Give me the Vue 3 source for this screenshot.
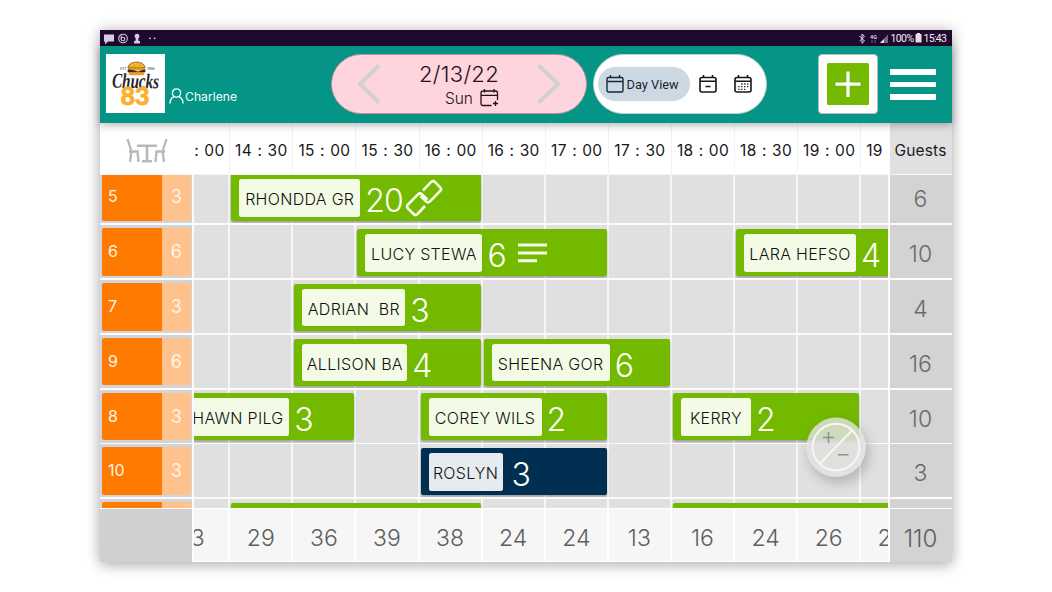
<script setup>
// Columnas de media hora
const columnas = [
  { hora: '14 : 00', total: '3' },
  { hora: '14 : 30', total: '29' },
  { hora: '15 : 00', total: '36' },
  { hora: '15 : 30', total: '39' },
  { hora: '16 : 00', total: '38' },
  { hora: '16 : 30', total: '24' },
  { hora: '17 : 00', total: '24' },
  { hora: '17 : 30', total: '13' },
  { hora: '18 : 00', total: '16' },
  { hora: '18 : 30', total: '24' },
  { hora: '19 : 00', total: '26' },
  { hora: '19 : 30', total: '24' }
]

// inicio = columna, duracion = medias horas, ancho = ancho de la etiqueta
const mesas = [
  { mesa: '5', plazas: 3, guests: 6, reservas: [
    { nombre: 'RHONDDA GR', personas: 20, inicio: 2, duracion: 4, ancho: 121, icono: 'link' }
  ] },
  { mesa: '6', plazas: 6, guests: 10, reservas: [
    { nombre: 'LUCY STEWA', personas: 6, inicio: 4, duracion: 4, ancho: 117, icono: 'nota' },
    { nombre: 'LARA HEFSO', personas: 4, inicio: 10, duracion: 3, ancho: 112 }
  ] },
  { mesa: '7', plazas: 3, guests: 4, reservas: [
    { nombre: 'ADRIAN\u00a0 BR', personas: 3, inicio: 3, duracion: 3, ancho: 103 }
  ] },
  { mesa: '9', plazas: 6, guests: 16, reservas: [
    { nombre: 'ALLISON BA', personas: 4, inicio: 3, duracion: 3, ancho: 105 },
    { nombre: 'SHEENA GOR', personas: 6, inicio: 6, duracion: 3, ancho: 118 }
  ] },
  { mesa: '8', plazas: 3, guests: 10, reservas: [
    { nombre: 'SHAWN PILG', personas: 3, inicio: 1, duracion: 3, ancho: 113 },
    { nombre: 'COREY WILS', personas: 2, inicio: 5, duracion: 3, ancho: 113 },
    { nombre: 'KERRY', personas: 2, inicio: 9, duracion: 3, ancho: 70 }
  ] },
  { mesa: '10', plazas: 3, guests: 3, reservas: [
    { nombre: 'ROSLYN', personas: 3, inicio: 5, duracion: 3, ancho: 74, sentado: true }
  ] },
  { mesa: '', plazas: '', guests: '', reservas: [
    { nombre: '', personas: '', inicio: 2, duracion: 4, ancho: 0 },
    { nombre: '', personas: '', inicio: 9, duracion: 4, ancho: 0 }
  ] }
]
</script>

<template>
  <div class="pagina">
    <div class="tablet">
      <div class="estado">
        <div class="estado-izq">
          <svg width="62" height="15" viewBox="0 0 62 15">
            <path d="M4 3.5h10v7H8l-3 3v-3H4z" fill="#d8cde0" />
            <circle cx="23" cy="7.5" r="4.3" fill="none" stroke="#d8cde0" stroke-width="1.1" />
            <circle cx="23" cy="8" r="1.8" fill="none" stroke="#d8cde0" stroke-width="1.1" />
            <path d="M21.2 4.5v4" stroke="#d8cde0" />
            <circle cx="37" cy="5.2" r="2.4" fill="#d8cde0" />
            <path d="M36 6h2l.6 4H40v2.5h-6V10h1.4z" fill="#d8cde0" />
            <circle cx="50" cy="7.3" r=".9" fill="#d8cde0" />
            <circle cx="54.6" cy="7.3" r=".9" fill="#d8cde0" />
          </svg>
        </div>
        <div class="estado-der">
          <svg width="33" height="15" viewBox="0 0 33 15">
            <path d="M1.500 5l5 5-2.500 2.300V3l2.500 2.200-5 5" fill="none" stroke="#e6dfea" />
            <text x="12" y="7.500" font-size="5.500" fill="#d8cde0" font-weight="700">4G</text>
            <path d="M14 9v3M17 12V9" stroke="#8c7d98" stroke-width=".8" />
            <path d="M30 3.500V12h-8z" fill="#76677f" />
            <path d="M26 8v4h-4z" fill="#e6dfea" />
          </svg>
          <span class="bateria-texto">100%</span>
          <svg width="7" height="10" viewBox="0 0 7 10"><path d="M2 0h3v1h1.500v8.500h-6V1H2z" fill="#e6dfea" /></svg>
          <span class="reloj">15:43</span>
        </div>
      </div>

      <header class="cabecera">
        <div class="logo">
          <svg width="59" height="59" viewBox="0 0 59 59">
            <path d="M22 14c0-8 17-8 17 0z" fill="#f5ac25" stroke="#5a3410" stroke-width=".6" />
            <path d="M26 10.500h.8M29 9.300h.8M32.500 10h.8M30.500 12h.8M35 11.800h.8" stroke="#fff2bd" stroke-width=".8" />
            <path d="M21.500 14.200h18l-1 1.300h-16z" fill="#7eaa2c" />
            <rect x="21.500" y="15.300" width="18" height="3.200" rx="1.400" fill="#5b1d10" />
            <path d="M22 15.200h17l-4 1.300-3 1.200-4-1.400z" fill="#ffc52e" />
            <path d="M22.300 18.700h16.500q-.3 2.600-2 2.600H24.200q-1.600 0-1.900-2.600z" fill="#efa021" />
            <text x="14" y="16" font-size="3.400" fill="#444">EST</text>
            <text x="41" y="16" font-size="3.400" fill="#444">1996</text>
            <text class="chucks" x="29.500" y="34" text-anchor="middle" textLength="47" lengthAdjust="spacingAndGlyphs" transform="rotate(1 29.500 30)">Chucks</text>
            <text class="ochenta" x="29" y="51" text-anchor="middle" textLength="29" lengthAdjust="spacingAndGlyphs">83</text>
          </svg>
        </div>
        <div class="usuario">
          <svg width="15" height="16" viewBox="0 0 15 16" fill="none" stroke="#fff" stroke-width="1.400">
            <circle cx="7.500" cy="5" r="4.100" />
            <path d="M1 15.500C1 11 3.500 9.200 5.300 8.600M14 15.500c0-4.500-2.500-6.300-4.300-6.900" />
          </svg>
          <span>Charlene</span>
        </div>

        <div class="fecha">
          <svg width="24" height="40" viewBox="0 0 24 40" class="flecha"><path d="M22 1.500L3 20l19 18.500" /></svg>
          <div class="fecha-texto">
            <div class="dia">2/13/22</div>
            <div class="semana">
              <span>Sun</span>
              <svg width="19" height="18" viewBox="0 0 19 18" fill="none" stroke="#241014" stroke-width="1.300">
                <path d="M11.500 16.500H3q-2 0-2-2V4q0-2 2-2h12.500q2 0 2 2v7M1 6.300h16.500M4.500 0v3.500M14 0v3.500M15.500 12v5M13 14.500h5" />
              </svg>
            </div>
          </div>
          <svg width="24" height="40" viewBox="0 0 24 40" class="flecha"><path d="M2 1.500L21 20 2 38.500" /></svg>
        </div>

        <div class="vistas">
          <div class="vista-activa">
            <svg width="18" height="18" viewBox="0 0 18 18" fill="none" stroke="#14283a" stroke-width="1.400">
              <rect x="1" y="2.500" width="16" height="14.500" rx="1.500" /><path d="M1 6.500h16M4.500 0v3M13.500 0v3" />
            </svg>
            <span>Day View</span>
          </div>
          <svg class="vista-icono" width="18" height="18" viewBox="0 0 18 18" fill="none" stroke="#16161c" stroke-width="1.600">
            <rect x="1" y="2.500" width="16" height="14.500" rx="2" /><path d="M1 6.300h16M4.500 0v3M13.500 0v3M6.500 11.500h5" />
          </svg>
          <svg class="vista-icono" width="18" height="18" viewBox="0 0 18 18" fill="none" stroke="#16161c" stroke-width="1.600">
            <rect x="1" y="2.500" width="16" height="14.500" rx="2" /><path d="M1 6.300h16M4.500 0v3M13.500 0v3" />
            <path d="M7.300 9h7M4.300 11.700h10M4.300 14.300h7" stroke-width="1.300" stroke-dasharray="1.300 1.600" />
          </svg>
        </div>

        <button class="nuevo" type="button">
          <svg width="42" height="42" viewBox="0 0 42 42">
            <rect width="42" height="42" rx="1.500" fill="#72b900" />
            <path d="M21 8.500v25.500M8.500 21.200h25" stroke="#fff" stroke-width="3.200" />
          </svg>
        </button>
        <div class="menu"><i></i><i></i><i></i></div>
      </header>

      <div class="horas">
        <div class="horas-mesa">
          <svg width="42" height="25" viewBox="0 0 42 25" fill="none" stroke="#b9b9b9" stroke-width="2.300">
            <path d="M1.500 1l4 12.500M3 13.500h8.500l1 10.500M5.500 13l-1.500 11M40.500 1l-4 12.500M39 13.500h-8.500L29.500 24M36.500 13l1.500 11" />
            <path d="M11 7.700h20M21 7.700v15M16 23.300h10" stroke-width="2.600" />
          </svg>
        </div>
        <div class="ventana">
          <div class="linea">
            <div v-for="c in columnas" :key="c.hora" class="hora">{{ c.hora }}</div>
          </div>
        </div>
        <div class="horas-guests">Guests</div>
      </div>

      <div class="cuerpo">
        <div class="filas">
          <div v-for="(m, i) in mesas" :key="i" class="fila">
            <div class="mesa">
              <div class="mesa-numero">{{ m.mesa }}</div>
              <div class="mesa-plazas">{{ m.plazas }}</div>
            </div>
            <div class="ventana">
              <div class="linea">
                <div v-for="(c, n) in columnas" :key="n" class="celda" :style="{ gridColumn: n + 1 }"></div>
                <div
                  v-for="r in m.reservas"
                  :key="r.inicio"
                  class="reserva"
                  :class="{ sentado: r.sentado }"
                  :style="{ gridColumn: r.inicio + ' / span ' + r.duracion }"
                >
                  <template v-if="r.nombre">
                    <div class="nombre" :style="{ width: r.ancho + 'px' }">{{ r.nombre }}</div>
                    <div class="personas">{{ r.personas }}</div>
                    <svg v-if="r.icono === 'link'" class="icono-link" width="38" height="38" viewBox="0 0 38 38" fill="none" stroke="#f6ffe9" stroke-width="2.600" stroke-linejoin="round">
                      <path d="M18 11.500L26 3.200q2-2 4 0l5 5q2 2 0 4L25 22.300q-2 2-4 0L15.500 17" />
                      <path d="M20 27l-7.500 8q-2 2-4 0L3 29.500q-2-2 0-4L13 15.400q2-2 4 0l5.500 5.300" />
                    </svg>
                    <svg v-if="r.icono === 'nota'" class="icono-nota" width="29" height="20" viewBox="0 0 29 20" stroke="#f6ffe9" stroke-width="3">
                      <path d="M0 2h29M0 10h29M0 17.700h19" />
                    </svg>
                  </template>
                </div>
              </div>
            </div>
            <div class="guests">{{ m.guests }}</div>
          </div>
        </div>
      </div>

      <div class="totales">
        <div class="totales-mesa"></div>
        <div class="ventana">
          <div class="linea">
            <div v-for="(c, n) in columnas" :key="n" class="total">{{ c.total }}</div>
          </div>
        </div>
        <div class="total-general">110</div>
      </div>

      <div class="zoom">
        <svg width="60" height="60" viewBox="0 0 60 60" fill="none">
          <circle cx="30" cy="30" r="29.500" fill="#e2e2e2" fill-opacity=".82" />
          <circle cx="30" cy="30" r="23.300" stroke="#f7f7f2" stroke-width="2" fill="#d8dbd2" fill-opacity=".3" />
          <path d="M14 46.500L46 13.500" stroke="#f7f7f2" stroke-width="2" />
          <path d="M17 20.500h11M22.500 15v11M32 37.700h10.500" stroke="#8b918b" stroke-width="1.500" />
        </svg>
      </div>
    </div>
  </div>
</template>

<style>
body {
  margin: 0;
  background: #fff;
}
</style>

<style scoped>
.pagina {
  box-sizing: border-box;
  width: 1052px;
  height: 592px;
  padding: 30px 0 0 100px;
  overflow: hidden;
  font-family: Inter, "Liberation Sans", sans-serif;
}

.tablet {
  position: relative;
  display: flex;
  flex-direction: column;
  width: 851.5px;
  height: 532px;
  background: #fff;
  box-shadow: 0 0 14px rgba(0, 0, 0, 0.24), 0 5px 12px rgba(0, 0, 0, 0.14);
}

.estado {
  flex: none;
  display: flex;
  justify-content: space-between;
  height: 15.5px;
  background: #20082e;
}

.estado-der {
  display: flex;
  align-items: center;
  padding: 1px 6px 0 0;
  font-family: Roboto, sans-serif;
  font-size: 10.5px;
  color: #f4eff7;
}

.bateria-texto {
  width: 22px;
  margin-right: 2px;
  letter-spacing: -0.6px;
}

.reloj {
  width: 22px;
  margin-left: 2px;
  letter-spacing: -0.7px;
}

.cabecera {
  position: relative;
  z-index: 2;
  flex: none;
  box-sizing: border-box;
  display: flex;
  align-items: flex-start;
  height: 77.5px;
  padding: 8.5px 15px 0 6px;
  background: #059587;
  box-shadow: 0 2px 8px rgba(0, 0, 0, 0.3);
}

.logo {
  flex: none;
  width: 59px;
  height: 59px;
  background: #fff;
}

.logo svg {
  display: block;
}

.chucks {
  font-family: "Liberation Serif", serif;
  font-size: 21px;
  font-style: italic;
  font-weight: 700;
  fill: #26262a;
}

.ochenta {
  font-family: Lato, sans-serif;
  font-size: 24px;
  font-weight: 900;
  fill: #fbb02d;
  stroke: #fbb02d;
  stroke-width: 0.8px;
}

.usuario {
  display: flex;
  align-items: center;
  width: 162px;
  margin: 33.5px 0 0 3.5px;
  gap: 1.5px;
  color: #f2fffd;
  font-size: 12.2px;
  white-space: nowrap;
}

.usuario span {
  padding-top: 1.5px;
}

.fecha {
  flex: none;
  box-sizing: border-box;
  display: flex;
  justify-content: space-between;
  width: 256px;
  height: 60px;
  margin-left: 0.5px;
  padding: 9px 25px 0;
  border: 1px solid #c58f9a;
  border-radius: 30px;
  background: #fed4de;
  color: #241014;
}

.flecha {
  fill: none;
  stroke: #d0d1cc;
  stroke-width: 4;
}

.fecha-texto {
  text-align: center;
}

.dia {
  height: 24px;
  margin-top: -3px;
  font-size: 22px;
  font-weight: 300;
  line-height: 26px;
  letter-spacing: 0.3px;
}

.semana {
  display: flex;
  align-items: center;
  justify-content: flex-end;
  gap: 7px;
  height: 24px;
  padding-top: 1px;
  font-size: 15.5px;
  font-weight: 300;
}

.vistas {
  flex: none;
  box-sizing: border-box;
  display: flex;
  align-items: center;
  width: 174px;
  height: 60px;
  margin-left: 5.5px;
  padding-left: 4px;
  border: 1px solid #c4cdd2;
  border-radius: 30px;
  background: #fff;
}

.vista-activa {
  box-sizing: border-box;
  display: flex;
  align-items: center;
  gap: 3px;
  width: 92px;
  height: 34px;
  padding-left: 8px;
  border-radius: 17px;
  background: #cdd9e2;
  color: #172633;
  font-family: Roboto, sans-serif;
  font-size: 12.8px;
  white-space: nowrap;
}

.vista-icono {
  margin-left: 9px;
}

.vista-icono + .vista-icono {
  margin-left: 17.5px;
}

.nuevo {
  flex: none;
  box-sizing: border-box;
  display: flex;
  align-items: center;
  justify-content: center;
  width: 60px;
  height: 60px;
  margin-left: 51px;
  padding: 0;
  border: 1.5px solid #b9b9c4;
  border-radius: 4px;
  background: #fff;
}

.menu {
  flex: none;
  display: flex;
  flex-direction: column;
  gap: 7px;
  width: 46px;
  margin: 15px 0 0 12px;
}

.menu i {
  height: 5.5px;
  background: #fff;
}

.horas,
.fila,
.totales {
  display: grid;
  grid-template-columns: 92px 694px 62px;
  grid-template-rows: 100%;
  column-gap: 1.75px;
}

.horas {
  flex: none;
  height: 51px;
  background: #fff;
  border-bottom: 1px solid #f6f6f8;
}

.horas-mesa {
  padding: 15px 0 0 26px;
}

.ventana {
  overflow: hidden;
}

.linea {
  display: grid;
  grid-template-columns: repeat(12, 63.1px);
  grid-template-rows: 100%;
  height: 100%;
  margin-left: -26.6px;
}

.hora {
  box-sizing: border-box;
  border-right: 1.5px solid #f3f3f7;
  color: #17171a;
  font-size: 15.5px;
  line-height: 55px;
  letter-spacing: 0.3px;
  word-spacing: 0.7px;
  text-align: center;
  white-space: nowrap;
}

.horas-guests {
  overflow: hidden;
  background: #e0e0e0;
  color: #1c1c1e;
  font-size: 15.5px;
  line-height: 55px;
  letter-spacing: 0.2px;
  text-align: center;
}

.cuerpo {
  flex: none;
  height: 332.5px;
  overflow: hidden;
  background: #fbfbfb;
}

.filas {
  margin-top: -4.6px;
}

.fila {
  height: 53px;
  padding-bottom: 1.8px;
}

.mesa {
  box-sizing: border-box;
  display: flex;
  padding: 3px 1px 2.5px 2px;
  background: #d3d4da;
}

.mesa-numero {
  box-sizing: border-box;
  width: 59.5px;
  padding-left: 6px;
  border-radius: 2px 0 0 2px;
  background: #ff7a00;
  color: #fff3e6;
  font-size: 16px;
  line-height: 47px;
}

.mesa-plazas {
  flex: 1;
  background: #ffc28c;
  color: #fff3e6;
  font-size: 18px;
  line-height: 47px;
  text-align: center;
}

.celda {
  grid-row: 1;
  box-sizing: border-box;
  border-right: 2px solid #f6f6f8;
  background: #e0e0e0;
}

.reserva {
  grid-row: 1;
  z-index: 1;
  display: flex;
  height: 47px;
  margin: 3.8px 2px 0 1px;
  border-radius: 2px;
  background: #72b900;
  box-shadow: 0 2px 3px rgba(0, 0, 0, 0.3);
}

.reserva.sentado {
  background: #002f52;
}

.nombre {
  flex: none;
  height: 37.5px;
  margin: 5px 0 0 8px;
  border-radius: 2.5px;
  background: #f3fbe7;
  color: #111;
  font-size: 16px;
  font-weight: 300;
  line-height: 41px;
  letter-spacing: 0.3px;
  text-align: center;
  white-space: nowrap;
}

.sentado .nombre {
  background: #e6ebf0;
}

.personas {
  margin-left: 5px;
  color: #fafff2;
  font-size: 32px;
  font-weight: 300;
  line-height: 54px;
  letter-spacing: -1px;
}

.sentado .personas {
  margin-left: 9px;
}

.icono-link {
  margin: 5px 0 0 2px;
}

.icono-nota {
  margin: 14px 0 0 12px;
}

.guests {
  background: #d3d3d3;
  color: #6a6a6a;
  font-size: 23px;
  font-weight: 300;
  line-height: 59px;
  text-align: center;
}

.totales {
  flex: none;
  box-sizing: border-box;
  height: 54.5px;
  border-top: 1.5px solid #fff;
  background: #fff;
}

.totales-mesa {
  background: #d0d0d0;
}

.total {
  box-sizing: border-box;
  border-right: 2px solid #fff;
  border-bottom: 1px solid #fff;
  background: #f6f6f6;
  color: #5e5e5e;
  font-size: 23px;
  font-weight: 300;
  line-height: 59px;
  text-align: center;
}

.total-general {
  background: #d3d3d3;
  color: #5e5e5e;
  font-size: 24px;
  font-weight: 300;
  line-height: 59px;
  text-align: center;
}

.zoom {
  position: absolute;
  z-index: 3;
  left: 706px;
  top: 387px;
  width: 60px;
  height: 60px;
  border-radius: 50%;
  box-shadow: 3px 6px 12px rgba(0, 0, 0, 0.2);
}
</style>
